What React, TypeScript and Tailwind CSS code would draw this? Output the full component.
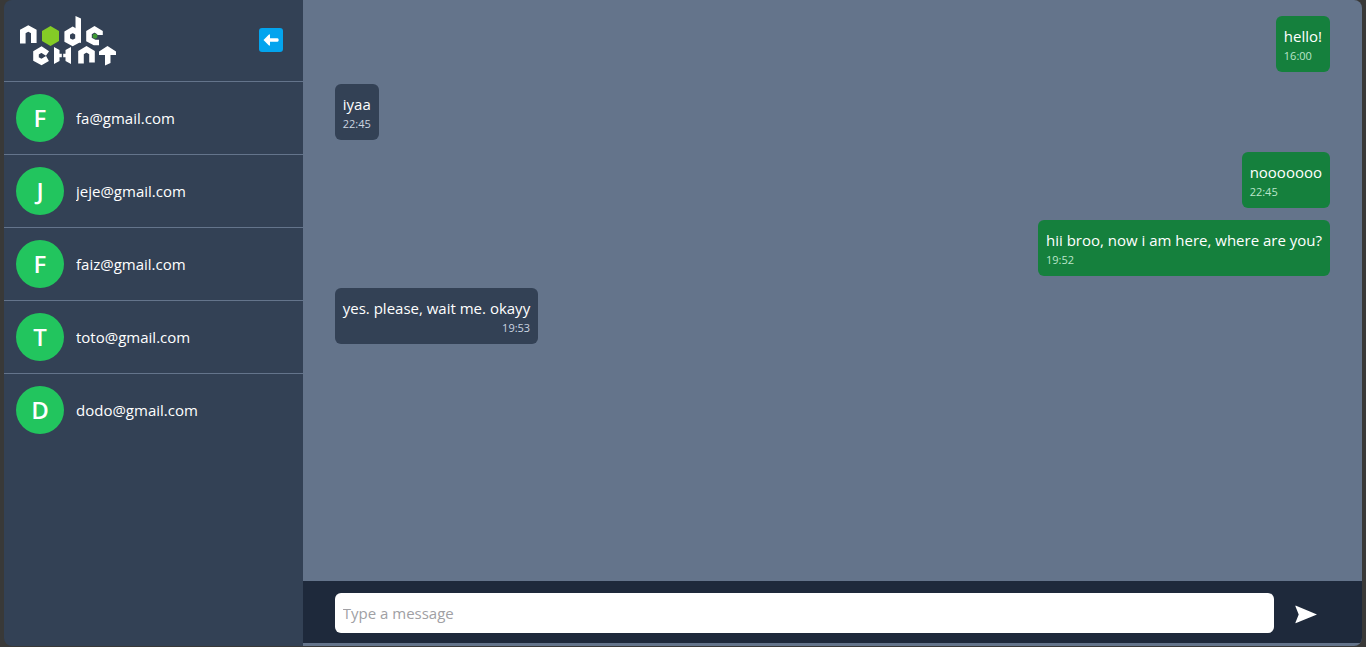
import React from "react";

type Contact = { email: string };
type Message = { text: string; time: string; mine: boolean; timeRight?: boolean };

const contacts: Contact[] = [
  { email: "fa@gmail.com" },
  { email: "jeje@gmail.com" },
  { email: "faiz@gmail.com" },
  { email: "toto@gmail.com" },
  { email: "dodo@gmail.com" },
];

const messages: Message[] = [
  { text: "hello!", time: "16:00", mine: true },
  { text: "iyaa", time: "22:45", mine: false },
  { text: "nooooooo", time: "22:45", mine: true },
  { text: "hii broo, now i am here, where are you?", time: "19:52", mine: true },
  { text: "yes. please, wait me. okayy", time: "19:53", mine: false, timeRight: true },
];

function Logo() {
  return (
    <svg
      viewBox="0 0 96 48"
      role="img"
      aria-label="Node Chat"
      className="h-12 w-24 overflow-visible"
      fill="none"
      stroke="#fff"
      strokeWidth="5.6"
      strokeLinejoin="miter"
    >
      <path d="M2.800 27.500V15.500L8.300 12.500L13.800 15.500V27" />
      <path d="M30.500 10L39 15V25L30.500 30L22 25V15Z" fill="#84cc26" stroke="none" />
      <path d="M58.200 17L52.700 13.800L47.200 17V24L52.700 27L58.200 24Z" />
      <path d="M55.500 0L61 2.500V27L55.500 25Z" fill="#fff" stroke="none" />
      <path d="M79 26.500L74.500 26.500L69 23.500V16.500L74.500 13.300L80 16.500V19" />
      <path d="M75 17.500L77.300 18.800V21.500L75 22.800L72.700 21.500V18.800Z" fill="#3f9a32" stroke="none" />
      <path d="M27.500 37.500L21.500 33.600L16 36.800V43L21.500 46L27.500 42.500" />
      <path d="M34 31L39.500 34V45L34 48ZM51 31L45.500 34V45L51 48Z" fill="#fff" stroke="none" />
      <path d="M38 39.500H41.800M43.200 39.500H47" strokeWidth="3.500" />
      <path d="M61 47.500V36.500L66.500 33.300L72 36.500V46.500" />
      <path d="M79 39V35.500L87.500 30L96 35.500V39H90.500V47L85 49.500V39Z" fill="#fff" stroke="none" />
    </svg>
  );
}

function BackIcon() {
  return (
    <svg viewBox="0 0 24 24" className="size-6" aria-hidden="true">
      <rect width="24" height="24" rx="3" fill="#03a4ee" />
      <path
        d="M4.500 12L9.700 6.700Q11 5.700 11 7.300V10.300H18.500Q19.700 10.300 19.700 12T18.500 13.700H11V16.700Q11 18.300 9.700 17.300Z"
        fill="#fff"
      />
    </svg>
  );
}

function Sidebar() {
  return (
    <aside className="flex w-[22%] shrink-0 flex-col bg-[#334155]">
      <header className="flex items-center justify-between border-b border-[#64748b] pt-4 pr-5 pb-[17px] pl-4">
        <Logo />
        <button type="button" aria-label="Back">
          <BackIcon />
        </button>
      </header>
      <ul className="divide-y divide-[#64748b]">
        {contacts.map((c) => (
          <li key={c.email}>
            <button type="button" className="flex w-full items-center gap-3 p-3 text-left">
              <span className="flex size-12 shrink-0 items-center justify-center rounded-full bg-[#22c55e] text-2xl font-semibold">
                {c.email[0].toUpperCase()}
              </span>
              <span className="truncate text-[15px] leading-6">{c.email}</span>
            </button>
          </li>
        ))}
      </ul>
    </aside>
  );
}

function Bubble({ message }: { message: Message }) {
  return (
    <li
      className={`max-w-3/4 rounded-md p-2 ${message.mine ? "self-end bg-[#15803d]" : "self-start bg-[#334155]"}`}
    >
      <p className="text-[15px] leading-6">{message.text}</p>
      <time
        className={`block text-[11px] leading-4 font-medium ${message.mine ? "text-[#bbe5ca]" : "text-[#cbd5e1]"} ${message.timeRight ? "text-right" : "text-left"}`}
      >
        {message.time}
      </time>
    </li>
  );
}

export default function App() {
  return (
    <div className="h-screen bg-[#393938] px-1 pb-px font-['Open_Sans','Noto_Sans',sans-serif] text-white">
      <div className="flex h-full overflow-hidden rounded-lg">
        <Sidebar />
        <main className="flex min-w-0 flex-1 flex-col bg-[#64748b] pb-[3px]">
          <ul className="flex min-h-0 flex-1 flex-col gap-3 overflow-hidden px-8 py-4">
            {messages.map((m) => (
              <Bubble key={m.text} message={m} />
            ))}
          </ul>
          <form
            className="flex items-center gap-5 bg-[#1e293b] pt-3 pr-11 pb-[10px] pl-8"
            onSubmit={(e) => e.preventDefault()}
          >
            <input
              type="text"
              aria-label="Message"
              placeholder="Type a message"
              className="h-10 min-w-0 flex-1 rounded-md bg-white px-2 text-[15px] text-[#1e293b] outline-none placeholder:text-[#a0a0a4]"
            />
            <button type="submit" aria-label="Send">
              <svg viewBox="0 0 24 24" className="size-6" fill="#fff" aria-hidden="true">
                <path d="M1.500 4.500L23 13.500L1.500 22.200Q1.200 21.700 2 20.200L4.700 13.500L2 6.700Q1.200 5.200 1.500 4.500Z" />
              </svg>
            </button>
          </form>
        </main>
      </div>
    </div>
  );
}
